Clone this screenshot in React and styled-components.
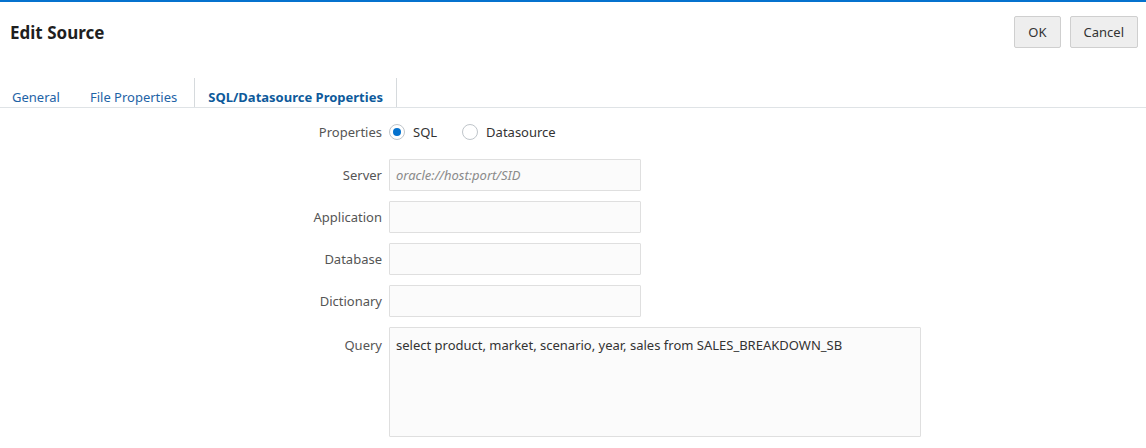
import React from "react";
import styled, { createGlobalStyle } from "styled-components";

const Global = createGlobalStyle`
  html, body { margin: 0; padding: 0; background: #ffffff; }
  body { font-family: "Noto Sans", "Open Sans", sans-serif; font-size: 13px; color: #333; }
`;

const Page = styled.div`
  width: 1146px;
  height: 448px;
  border-top: 2px solid #0572ce;
  box-sizing: border-box;
  background: #fff;
  overflow: hidden;
`;

const Header = styled.div`
  display: flex;
  align-items: center;
  justify-content: space-between;
  height: 60px;
  padding: 0 8px 0 10px;
`;

const Title = styled.h1`
  margin: 0;
  font-size: 17px;
  font-weight: 700;
  color: #1f1f1f;
`;

const Actions = styled.div`
  display: flex;
  gap: 9px;
  margin-top: -1px;
`;

const Button = styled.button`
  height: 32px;
  padding: 0 ${(p) => p.$pad || 13}px;
  font-family: inherit;
  font-size: 13px;
  color: #333;
  background: #eeeeee;
  border: 1px solid #cfcfcf;
  border-radius: 2px;
`;

const TabList = styled.div`
  display: flex;
  margin-top: 16px;
  height: 29px;
  border-bottom: 1px solid #dfe3e6;
`;

const Tab = styled.div`
  display: flex;
  align-items: flex-end;
  padding: 0 ${(p) => (p.$active ? 13 : 15)}px 1px;
  font-size: 13px;
  color: ${(p) => (p.$active ? "#0d5a9b" : "#1e63a6")};
  font-weight: ${(p) => (p.$active ? 700 : 400)};
  border-left: ${(p) => (p.$active ? "1px solid #d6dadd" : "none")};
  border-right: ${(p) => (p.$active ? "1px solid #d6dadd" : "none")};
  &:first-child { padding-left: 12px; }
`;

const Form = styled.div`
  display: grid;
  grid-template-columns: 382px auto;
  column-gap: 7px;
  row-gap: 10px;
  padding-top: 12px;
  align-items: center;
`;

const Label = styled.label`
  justify-self: end;
  align-self: ${(p) => (p.$top ? "start" : "center")};
  padding-top: ${(p) => p.$top || 0}px;
  line-height: ${(p) => (p.$lh ? `${p.$lh}px` : "normal")};
  color: #555;
  font-size: 13px;
`;

const RadioGroup = styled.div`
  display: flex;
  align-items: center;
  height: 24px;
  margin-bottom: 5px;
`;

const RadioOption = styled.label`
  display: flex;
  align-items: center;
  gap: 8px;
  margin-right: 25px;
  color: #333;
`;

const RadioCircle = styled.span`
  box-sizing: border-box;
  width: 16px;
  height: 16px;
  border-radius: 50%;
  border: 1px solid #bfc5ca;
  background: #fff;
  display: flex;
  align-items: center;
  justify-content: center;
  &::after {
    content: "";
    width: 8px;
    height: 8px;
    border-radius: 50%;
    background: ${(p) => (p.$checked ? "#0572ce" : "transparent")};
  }
`;

const Input = styled.div`
  box-sizing: border-box;
  width: ${(p) => p.$w || 252}px;
  height: ${(p) => p.$h || 32}px;
  background: #fbfbfb;
  border: 1px solid #dfdfdf;
  border-radius: 1px;
  padding: ${(p) => (p.$multi ? "8px 6px" : "0 6px")};
  display: flex;
  align-items: ${(p) => (p.$multi ? "flex-start" : "center")};
  color: ${(p) => (p.$placeholder ? "#8a8a8a" : "#333")};
  font-style: ${(p) => (p.$placeholder ? "italic" : "normal")};
  font-size: 13px;
`;

export default function App() {
  return (
    <>
      <Global />
      <Page>
        <Header>
          <Title>Edit Source</Title>
          <Actions>
            <Button $pad={13}>OK</Button>
            <Button $pad={13}>Cancel</Button>
          </Actions>
        </Header>
        <TabList>
          <Tab>General</Tab>
          <Tab style={{ paddingRight: 17 }}>File Properties</Tab>
          <Tab $active>SQL/Datasource Properties</Tab>
        </TabList>
        <Form>
          <Label $top={0.01} $lh={24}>Properties</Label>
          <RadioGroup>
            <RadioOption>
              <RadioCircle $checked />
              SQL
            </RadioOption>
            <RadioOption>
              <RadioCircle />
              Datasource
            </RadioOption>
          </RadioGroup>
          <Label>Server</Label>
          <Input $placeholder>oracle://host:port/SID</Input>
          <Label>Application</Label>
          <Input />
          <Label>Database</Label>
          <Input />
          <Label>Dictionary</Label>
          <Input />
          <Label $top={9}>Query</Label>
          <Input $multi $w={532} $h={110}>
            select product, market, scenario, year, sales from SALES_BREAKDOWN_SB
          </Input>
        </Form>
      </Page>
    </>
  );
}
